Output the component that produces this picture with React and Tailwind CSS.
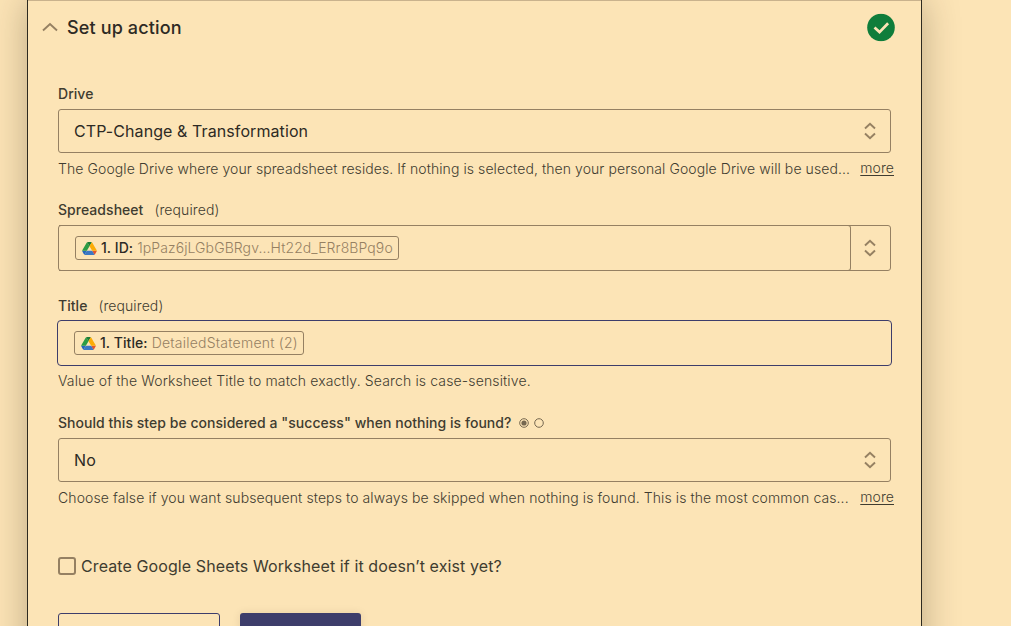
const DriveIcon = () => (
  <svg viewBox="0 0 87.3 78" className="ml-px h-[13px] w-[15px] shrink-0">
    <path d="m6.6 66.85 3.85 6.65c.8 1.4 1.95 2.5 3.3 3.3l13.75-23.8h-27.5c0 1.55.4 3.1 1.2 4.5z" fill="#2468bd" />
    <path d="m43.65 25-13.75-23.8c-1.35.8-2.5 1.9-3.3 3.3l-25.4 44a9.06 9.06 0 0 0 -1.2 4.5h27.5z" fill="#2d9c44" />
    <path d="m73.55 76.8c1.35-.8 2.5-1.9 3.3-3.3l1.6-2.75 7.65-13.25c.8-1.4 1.2-2.95 1.2-4.5h-27.502l5.852 11.5z" fill="#e2552f" />
    <path d="m43.65 25 13.75-23.8c-1.35-.8-2.9-1.2-4.5-1.2h-18.5c-1.6 0-3.15.45-4.5 1.2z" fill="#1b7d36" />
    <path d="m59.8 53h-32.3l-13.75 23.8c1.35.8 2.9 1.2 4.5 1.2h50.8c1.6 0 3.15-.45 4.5-1.2z" fill="#3c78c4" />
    <path d="m73.4 26.5-12.7-22c-.8-1.4-1.95-2.5-3.3-3.3l-13.75 23.8 16.15 28h27.45c0-1.55-.4-3.1-1.2-4.5z" fill="#fbac06" />
  </svg>
);

const SortIcon = () => (
  <svg viewBox="0 0 12 18" fill="none" stroke="#958062" strokeWidth="1.9" className="h-[18px] w-3 shrink-0">
    <path d="M1 6.5 6 1.7l5 4.8M1 11.5l5 4.8 5-4.8" />
  </svg>
);

const Label = ({ text, required, children }) => (
  <div className="flex h-5 items-center whitespace-nowrap text-sm text-[#3f3c30]">
    <span className="font-[550] tracking-[0.04px]">{text}</span>
    {required && <span className="ml-[11px] font-[350] tracking-[0.1px]">(required)</span>}
    {children}
  </div>
);

const Select = ({ value }) => (
  <div className="mt-[5px] flex h-11 items-center justify-between rounded-[3px] border border-[#958062] pr-[14px] pl-[15px]">
    <span className="text-base tracking-[0.09px] text-[#2d2a24]">{value}</span>
    <SortIcon />
  </div>
);

const Help = ({ text, more, tracking = "tracking-[0.08px]" }) => (
  <div className="flex h-5 items-center whitespace-nowrap text-sm font-[350] text-[#3f3c30]">
    <span className={tracking}>{text}</span>
    {more && (
      <a className="relative -top-px -mr-[3px] ml-auto tracking-[0.08px] underline underline-offset-2">more</a>
    )}
  </div>
);

const Pill = ({ name, value, tracking }) => (
  <div className="flex h-6 items-center rounded-[3px] border border-[#958062] px-[5px] text-sm whitespace-nowrap">
    <DriveIcon />
    <span className="ml-1 font-[550] tracking-[0.06px] text-[#2d2a24]">{name}</span>
    <span className={`ml-1 font-[350] text-[#958062] ${tracking}`}>{value}</span>
  </div>
);

const App = () => {
  return (
    <div className="h-[626px] w-[1011px] overflow-hidden bg-[#fce4b6] font-['Inter',sans-serif]">
      <main className="ml-[27px] h-[680px] w-[895px] border-x border-[#2d2a20] bg-[#fce4b6] shadow-[0_0_35px_rgba(45,35,20,0.3)]">
        <header className="flex h-[54px] items-center border-t border-[#c9b28d] pr-[26.5px] pl-[14px]">
          <svg viewBox="0 0 16 10" fill="none" stroke="#958062" strokeWidth="1.9" className="h-[10px] w-4 -translate-y-px">
            <path d="M1 8.5 8 2l7 6.5" />
          </svg>
          <h2 className="ml-[9px] text-lg font-[550] tracking-[0.14px] text-[#2d2a24]">Set up action</h2>
          <svg viewBox="0 0 28 28" className="ml-auto size-7 -translate-y-[0.5px]">
            <circle cx="14" cy="14" r="13.8" fill="#0f7d3b" />
            <path d="m7.5 14 5 4.6 8.6-8.9" fill="none" stroke="#fce4b6" strokeWidth="2.7" />
          </svg>
        </header>

        <form className="px-[30px] pt-[30px]">
          <Label text="Drive" />
          <Select value="CTP-Change & Transformation" />
          <div className="mt-[6px]">
            <Help
              text="The Google Drive where your spreadsheet resides. If nothing is selected, then your personal Google Drive will be used..."
              more
            />
          </div>

          <div className="mt-[21px]">
            <Label text="Spreadsheet" required />
            <div className="mt-[5px] flex h-[46px] rounded-[3px] border border-[#958062]">
              <div className="-my-px flex flex-1 items-center rounded-r-[3px] border-y border-r border-[#958062] pl-4">
                <Pill name="1. ID:" value="1pPaz6jLGbGBRgv...Ht22d_ERr8BPq9o" tracking="tracking-[0.09px]" />
              </div>
              <div className="flex w-[39px] items-center pl-[13px]">
                <SortIcon />
              </div>
            </div>
          </div>

          <div className="mt-[25px]">
            <Label text="Title" required />
            <div className="-mx-px mt-1 flex h-[46px] items-center rounded-[4px] border border-[#3d3d6b] pl-4">
              <Pill name="1. Title:" value="DetailedStatement (2)" tracking="tracking-[0.24px]" />
            </div>
            <div className="mt-[5px]">
              <Help
                text="Value of the Worksheet Title to match exactly. Search is case-sensitive."
                tracking="tracking-[0.14px]"
              />
            </div>
          </div>

          <div className="mt-[22px]">
            <Label text={'Should this step be considered a "success" when nothing is found?'}>
              <svg viewBox="0 0 26 10" fill="none" stroke="#756750" className="ml-[8px] h-[10px] w-[26px]">
                <circle cx="5" cy="5" r="4.3" />
                <circle cx="5" cy="5" r="2.6" fill="#756750" stroke="none" />
                <circle cx="20" cy="5" r="4.3" />
              </svg>
            </Label>
            <Select value="No" />
            <div className="mt-[6px]">
              <Help
                text="Choose false if you want subsequent steps to always be skipped when nothing is found. This is the most common cas..."
                tracking="tracking-[0.095px]"
                more
              />
            </div>
          </div>

          <div className="mt-12 flex h-5 items-center whitespace-nowrap">
            <span className="size-[18px] rounded-[3px] border-2 border-[#958062]" />
            <span className="ml-[5px] text-base tracking-[0.1px] text-[#3f3c30]">Create Google Sheets Worksheet if it doesn’t exist yet?</span>
          </div>

          <div className="mt-[37px] flex gap-5">
            <div className="h-10 w-[162px] rounded-[3px] border border-[#3d3d6b]" />
            <div className="h-10 w-[121px] rounded-[3px] bg-[#3d3d6b] shadow-[0_0_8px_rgba(45,35,20,0.1)]" />
          </div>
        </form>
      </main>
    </div>
  );
};

export default App;
